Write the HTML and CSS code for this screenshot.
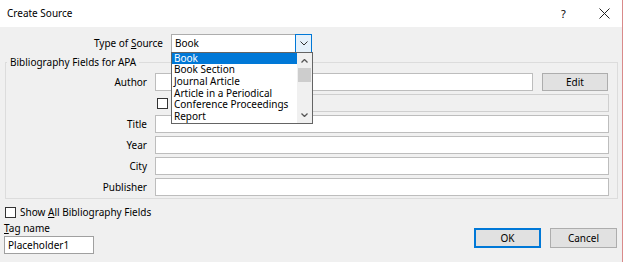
FILE: index.html
```html
<!DOCTYPE html>
<html>
<head>
  <title>Create Source</title>
  <link rel="stylesheet" href="styles.css">
</head>
<body>
  <div class="dialog">
    <!-- Title bar -->
    <div class="titlebar">
      <span class="title">Create Source</span>
      <span class="help">?</span>
      <span class="close">
        <svg width="11" height="11" viewBox="0 0 11 11"><path d="M0.5 0.5L10.5 10.5M10.5 0.5L0.5 10.5" stroke="#222" stroke-width="1"/></svg>
      </span>
    </div>

    <div class="content">
      <!-- Type of source -->
      <div class="source-row">
        <label class="source-label">Type of <u>S</u>ource</label>
        <div class="combo">
          <span class="combo-value">Book</span>
          <span class="combo-btn">
            <svg width="8" height="5" viewBox="0 0 8 5"><path d="M0.5 0.5L4 4L7.5 0.5" fill="none" stroke="#333" stroke-width="1"/></svg>
          </span>
          <div class="dropdown">
            <ul class="options">
              <li class="selected">Book</li>
              <li>Book Section</li>
              <li>Journal Article</li>
              <li>Article in a Periodical</li>
              <li>Conference Proceedings</li>
              <li>Report</li>
            </ul>
            <div class="scrollbar">
              <svg class="arrow" width="7" height="4" viewBox="0 0 7 4"><path d="M0.5 3.5L3.5 0.5L6.5 3.5" fill="none" stroke="#555" stroke-width="1.3"/></svg>
              <div class="thumb"></div>
              <svg class="arrow down" width="7" height="4" viewBox="0 0 7 4"><path d="M0.5 0.5L3.5 3.5L6.5 0.5" fill="none" stroke="#555" stroke-width="1.3"/></svg>
            </div>
          </div>
        </div>
      </div>

      <!-- Bibliography fields -->
      <fieldset class="group">
        <legend>Bibliography Fields for APA</legend>
        <div class="fields">
          <label>Author</label>
          <div class="author-row">
            <div class="field"></div>
            <button class="btn edit">Edit</button>
          </div>

          <span></span>
          <div class="corporate-row">
            <span class="check"></span>
            <div class="field disabled"></div>
          </div>

          <label>Title</label>
          <div class="field"></div>

          <label>Year</label>
          <div class="field"></div>

          <label>City</label>
          <div class="field"></div>

          <label>Publisher</label>
          <div class="field"></div>
        </div>
      </fieldset>

      <div class="show-all">
        <span class="check"></span>
        <span>Show <u>A</u>ll Bibliography Fields</span>
      </div>

      <div class="footer">
        <div class="tag">
          <div class="tag-label"><u>T</u>ag name</div>
          <div class="field tag-input">Placeholder1</div>
        </div>
        <div class="actions">
          <button class="btn ok">OK</button>
          <button class="btn">Cancel</button>
        </div>
      </div>
    </div>
  </div>
</body>
</html>
```

FILE: styles.css
```css
* {
  box-sizing: border-box;
  font-family: "Noto Sans", "Open Sans", sans-serif;
}

body {
  margin: 0;
  background-color: #fff;
  color: #000;
  font-size: 10px;
}

.dialog {
  width: 623px;
  height: 262px;
  border-right: 1px solid #d98a8a;
  background-color: #f0f0f0;
}

/* Title bar */
.titlebar {
  height: 27px;
  background-color: #fff;
  display: flex;
  align-items: center;
  padding: 0 0 1px 7px;
}

.title {
  flex: 1;
}

.help {
  font-size: 11px;
  width: 38px;
}

.close {
  width: 23px;
  display: flex;
}

.content {
  padding: 7px 4px 0 4px;
}

/* Type of Source */
.source-row {
  display: flex;
  align-items: center;
  height: 18px;
}

.source-label {
  width: 159px;
  text-align: right;
  margin-right: 8px;
}

.combo {
  position: relative;
  width: 141px;
  height: 19px;
  background-color: #fff;
  border: 1px solid #adadad;
  display: flex;
  align-items: center;
}

.combo-value {
  flex: 1;
  padding-left: 3px;
}

.combo-btn {
  width: 17px;
  height: 19px;
  margin: -1px -1px -1px 0;
  border: 1px solid #0078d7;
  background-color: #e5f1fb;
  display: flex;
  align-items: center;
  justify-content: center;
}

.dropdown {
  position: absolute;
  top: 17px;
  left: -1px;
  width: 142px;
  height: 72px;
  border: 1px solid #646464;
  background-color: #fff;
  display: flex;
  z-index: 2;
}

.options {
  list-style: none;
  margin: 0;
  padding: 0;
  flex: 1;
}

.options li {
  height: 11.7px;
  line-height: 11.7px;
  padding-left: 2px;
  white-space: nowrap;
}

.options li.selected {
  background-color: #0078d7;
  color: #fff;
}

.scrollbar {
  width: 15px;
  background-color: #f0f0f0;
  display: flex;
  flex-direction: column;
  align-items: center;
  padding-top: 6px;
}

.thumb {
  width: 13px;
  height: 14px;
  margin-top: 5px;
  background-color: #cdcdcd;
}

.arrow.down {
  margin-top: auto;
  margin-bottom: 6px;
}

/* Group box */
.group {
  margin: 3px 0 0 1px;
  padding: 0 8px 2px 0;
  border: 1px solid #dcdcdc;
}

.group legend {
  margin-left: 1px;
  padding: 0 3px;
  line-height: 14px;
}

.fields {
  display: grid;
  grid-template-columns: 141px 1fr;
  grid-auto-rows: 18px;
  column-gap: 8px;
  row-gap: 3px;
  padding-top: 4px;
}

.fields label {
  text-align: right;
  line-height: 18px;
}

.field {
  height: 18px;
  background-color: #fff;
  border: 1px solid #bdbdbd;
}

.field.disabled {
  flex: 1;
  background-color: #f0f0f0;
  border-color: #cfcfcf;
}

.author-row {
  display: flex;
  gap: 9px;
}

.author-row .field {
  flex: 1;
}

.corporate-row {
  display: flex;
  align-items: center;
  gap: 3px;
  padding-left: 2px;
}

.check {
  width: 11px;
  height: 11px;
  background-color: #fff;
  border: 1px solid #333;
}

.btn {
  height: 20px;
  width: 67px;
  padding: 0;
  font-size: 10px;
  color: #000;
  background-color: #e1e1e1;
  border: 1px solid #adadad;
}

.btn.edit {
  width: 66px;
  height: 18px;
  margin-right: 1px;
}

.btn.ok {
  border: 2px solid #0078d7;
}

/* Bottom area */
.show-all {
  display: flex;
  align-items: center;
  gap: 4px;
  height: 14px;
  margin-top: 6px;
  padding-left: 1px;
}

.footer {
  display: flex;
  justify-content: space-between;
  margin-top: 2px;
}

.tag-label {
  line-height: 14px;
}

.tag-input {
  width: 90px;
  margin-top: 1px;
  padding-left: 3px;
  line-height: 16px;
  border-color: #a0a0a0;
}

.actions {
  display: flex;
  gap: 9px;
  margin-top: 7px;
  margin-right: 1px;
}
```
